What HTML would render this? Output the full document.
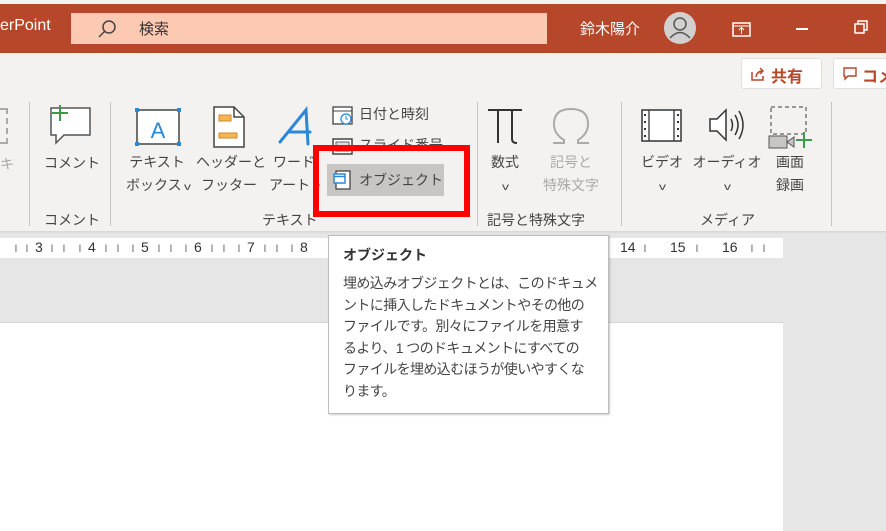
<!DOCTYPE html>
<html><head><meta charset="utf-8"><style>
*{margin:0;padding:0;box-sizing:border-box}
body{width:886px;height:531px;overflow:hidden;background:#e6e6e6;font-family:"Liberation Sans","Noto Sans CJK JP",sans-serif;position:relative}
.a{position:absolute;white-space:nowrap}
.t{font-size:14px;color:#444}
.c{text-align:center}
.sep{position:absolute;width:1px;background:#c8c6c4}
.v{font-size:10px;display:inline-block;transform:scaleX(1.4)}
</style></head><body>
<div class="a" style="left:0;top:0;width:886px;height:4px;background:#f3f2f1"></div>
<div class="a" style="left:0;top:4px;width:886px;height:49px;background:#b7472a"></div>
<div class="a" style="left:0;top:17px;color:#fff;font-size:16px">erPoint</div>
<div class="a" style="left:71px;top:13px;width:476px;height:31px;background:#fcc9b3"></div>
<svg class="a" style="left:94px;top:18px" width="26" height="22"><circle cx="15" cy="9" r="6" fill="none" stroke="#444" stroke-width="1.5"/><line x1="11" y1="13" x2="5" y2="19" stroke="#444" stroke-width="1.5"/></svg>
<div class="a" style="left:139px;top:18px;font-size:15px;color:#333">検索</div>
<div class="a" style="left:580px;top:18px;font-size:15px;color:#fff">鈴木陽介</div>
<svg class="a" style="left:663px;top:11px" width="34" height="34"><circle cx="17" cy="17" r="16" fill="#d2d0ce"/><circle cx="17" cy="13" r="6" fill="none" stroke="#555" stroke-width="1.5"/><path d="M7 27 Q17 16 27 27" fill="none" stroke="#555" stroke-width="1.5"/></svg>
<svg class="a" style="left:731px;top:20px" width="22" height="18"><rect x="2" y="3" width="17" height="13" fill="none" stroke="#fff" stroke-width="1.5"/><line x1="2" y1="6" x2="19" y2="6" stroke="#fff"/><path d="M10.5 14V8M8 10l2.5-2.5L13 10" stroke="#fff" fill="none"/></svg>
<div class="a" style="left:796px;top:28px;width:12px;height:1.5px;background:#fff"></div>
<svg class="a" style="left:853px;top:19px" width="16" height="16"><rect x="2" y="5" width="9" height="9" fill="none" stroke="#fff" stroke-width="1.5"/><path d="M5 5V2h9v9h-3" fill="none" stroke="#fff" stroke-width="1.5"/></svg>
<div class="a" style="left:0;top:53px;width:886px;height:180px;background:#f3f2f1"></div>
<div class="a" style="left:741px;top:58px;width:81px;height:31px;background:#fff;border:1px solid #e1dfdd;border-radius:3px"></div>
<svg class="a" style="left:749px;top:65px" width="18" height="18"><path d="M3 7v8h11v-4" fill="none" stroke="#b7472a" stroke-width="1.5"/><path d="M7 12Q8 6 14 6M11 3l3 3-3 3" fill="none" stroke="#b7472a" stroke-width="1.5"/></svg>
<div class="a" style="left:771px;top:63px;font-size:16px;font-weight:bold;color:#b7472a">共有</div>
<div class="a" style="left:833px;top:58px;width:60px;height:31px;background:#fff;border:1px solid #e1dfdd;border-radius:3px"></div>
<svg class="a" style="left:842px;top:66px" width="16" height="16"><path d="M2 2h12v8H6l-3 3v-3H2z" fill="none" stroke="#b7472a" stroke-width="1.4"/></svg>
<div class="a" style="left:862px;top:63px;font-size:16px;font-weight:bold;color:#b7472a">コメ</div>
<div class="a" style="left:0;top:108px;width:8px;height:36px;border:2px dashed #aaa;border-left:none"></div>
<div class="a" style="left:0;top:154px;font-size:14px;color:#aaa">キ</div>
<div class="sep" style="left:29px;top:102px;height:124px"></div>
<svg class="a" style="left:46px;top:104px" width="46" height="42"><path d="M5 4h39v27H18l-8 8v-8H5z" fill="#fff" stroke="#555" stroke-width="1.5"/><path d="M14 1v16M6 9h16" stroke="#3a9b4a" stroke-width="2"/></svg>
<div class="a t" style="left:44px;top:153px">コメント</div>
<div class="a t" style="left:44px;top:210px">コメント</div>
<div class="sep" style="left:110px;top:102px;height:124px"></div>
<svg class="a" style="left:134px;top:107px" width="48" height="40"><rect x="3" y="3" width="42" height="34" fill="#fff" stroke="#444" stroke-width="1.5"/><g fill="#2b88d8"><rect x="1" y="1" width="4" height="4"/><rect x="43" y="1" width="4" height="4"/><rect x="1" y="35" width="4" height="4"/><rect x="43" y="35" width="4" height="4"/></g><text x="24" y="31" font-size="22" fill="#2b88d8" text-anchor="middle" font-family="Liberation Sans">A</text></svg>
<svg class="a" style="left:212px;top:105px" width="34" height="44"><path d="M2 2h20l10 10v30H2z" fill="#fff" stroke="#444" stroke-width="1.5"/><path d="M22 2v10h10" fill="none" stroke="#444" stroke-width="1.5"/><rect x="7" y="10" width="12" height="6" fill="#f4b555" stroke="#d08a2a"/><rect x="7" y="28" width="18" height="5" fill="#f4b555" stroke="#d08a2a"/></svg>
<svg class="a" style="left:276px;top:106px" width="40" height="42"><path d="M4 36L30 4 32 38M12 26h22" fill="none" stroke="#2b88d8" stroke-width="3" stroke-linecap="round"/></svg>
<div class="a t c" style="left:126px;top:151px;width:62px;line-height:23px">テキスト<br>ボックス <span class="v">v</span></div>
<div class="a t c" style="left:196px;top:151px;width:66px;line-height:23px">ヘッダーと<br>フッター</div>
<div class="a t c" style="left:266px;top:151px;width:56px;line-height:23px">ワード<br>アート <span class="v">v</span></div>
<svg class="a" style="left:331px;top:104px" width="24" height="22"><rect x="2" y="3" width="19" height="17" fill="#fff" stroke="#444" stroke-width="1.3"/><line x1="2" y1="7" x2="21" y2="7" stroke="#444"/><circle cx="15" cy="15" r="5" fill="#fff" stroke="#2b88d8" stroke-width="1.3"/><path d="M15 12v3h2" stroke="#2b88d8" fill="none"/></svg>
<div class="a t" style="left:359px;top:104px">日付と時刻</div>
<svg class="a" style="left:331px;top:137px" width="24" height="20"><rect x="2" y="2" width="19" height="15" fill="#fff" stroke="#444" stroke-width="1.5"/><rect x="5" y="5" width="13" height="9" fill="#ddd" stroke="#666"/></svg>
<div class="a t" style="left:359px;top:135px">スライド番号</div>
<div class="a" style="left:327px;top:164px;width:117px;height:32px;background:#c8c6c4"></div>
<svg class="a" style="left:331px;top:168px" width="24" height="24"><rect x="5" y="3" width="14" height="18" fill="#fff" stroke="#444" stroke-width="1.3"/><rect x="3" y="6" width="11" height="9" fill="#fff" stroke="#2b88d8" stroke-width="1.5"/><line x1="3" y1="8.5" x2="14" y2="8.5" stroke="#2b88d8" stroke-width="1.5"/></svg>
<div class="a t" style="left:359px;top:170px">オブジェクト</div>
<div class="a t" style="left:262px;top:210px">テキスト</div>
<div class="a" style="left:313px;top:145px;width:157px;height:72px;border:6px solid #f00"></div>
<div class="sep" style="left:477px;top:102px;height:124px"></div>
<svg class="a" style="left:485px;top:106px" width="40" height="40"><path d="M3 4h34M13 4v33M27 4v29q0 4 5 4" fill="none" stroke="#333" stroke-width="2"/></svg>
<svg class="a" style="left:549px;top:106px" width="44" height="40"><path d="M4 37h11v-3q-10-6-10-16 0-15 17-15t17 15q0 10-10 16v3h11" fill="none" stroke="#aaa" stroke-width="2"/></svg>
<div class="a t c" style="left:482px;top:151px;width:46px;line-height:23px">数式<br><span class="v">v</span></div>
<div class="a t c" style="left:535px;top:151px;width:72px;line-height:23px;color:#aaa">記号と<br>特殊文字</div>
<div class="a t" style="left:487px;top:210px">記号と特殊文字</div>
<div class="sep" style="left:621px;top:102px;height:124px"></div>
<svg class="a" style="left:641px;top:109px" width="42" height="34"><rect x="1" y="1" width="39" height="31" fill="#fff" stroke="#333" stroke-width="1.5"/><line x1="8" y1="1" x2="8" y2="32" stroke="#333" stroke-width="1.3"/><line x1="33" y1="1" x2="33" y2="32" stroke="#333" stroke-width="1.3"/><g fill="#333"><rect x="3" y="5" width="2" height="2"/><rect x="3" y="12" width="2" height="2"/><rect x="3" y="19" width="2" height="2"/><rect x="3" y="26" width="2" height="2"/><rect x="36" y="5" width="2" height="2"/><rect x="36" y="12" width="2" height="2"/><rect x="36" y="19" width="2" height="2"/><rect x="36" y="26" width="2" height="2"/></g></svg>
<svg class="a" style="left:707px;top:107px" width="40" height="36"><path d="M3 12h7l9-9v30l-9-9H3z" fill="#fff" stroke="#333" stroke-width="1.5"/><path d="M24 12q3 6 0 12M28 8q6 10 0 20M32 4q8 14 0 28" fill="none" stroke="#333" stroke-width="1.5"/></svg>
<svg class="a" style="left:768px;top:106px" width="46" height="44"><rect x="3" y="1" width="35" height="27" fill="none" stroke="#777" stroke-width="1.5" stroke-dasharray="4 3"/><rect x="1" y="30" width="18" height="12" fill="#c8c6c4" stroke="#555"/><path d="M19 36l7-5v10z" fill="#c8c6c4" stroke="#555"/><path d="M36 26v16M28 34h16" stroke="#3a9b4a" stroke-width="2"/></svg>
<div class="a t c" style="left:636px;top:151px;width:52px;line-height:23px">ビデオ<br><span class="v">v</span></div>
<div class="a t c" style="left:692px;top:151px;width:70px;line-height:23px">オーディオ<br><span class="v">v</span></div>
<div class="a t c" style="left:768px;top:151px;width:44px;line-height:23px">画面<br>録画</div>
<div class="a t" style="left:700px;top:210px">メディア</div>
<div class="sep" style="left:831px;top:102px;height:124px"></div>
<div class="a" style="left:0;top:231px;width:886px;height:3px;background:linear-gradient(#d6d6d6,#e6e6e6)"></div>
<div class="a" style="left:0;top:238px;width:783px;height:20px;background:#fff"></div>
<div class="a" style="left:0;top:239px;font-size:14px;color:#333">
<span style="position:absolute;left:14px;color:#888">ı</span><span style="position:absolute;left:35px">3</span><span style="position:absolute;left:25px;color:#888">ı</span><span style="position:absolute;left:50px;color:#888">ı</span><span style="position:absolute;left:62px;color:#888">ı</span><span style="position:absolute;left:88px">4</span><span style="position:absolute;left:78px;color:#888">ı</span><span style="position:absolute;left:104px;color:#888">ı</span><span style="position:absolute;left:116px;color:#888">ı</span><span style="position:absolute;left:141px">5</span><span style="position:absolute;left:131px;color:#888">ı</span><span style="position:absolute;left:157px;color:#888">ı</span><span style="position:absolute;left:169px;color:#888">ı</span><span style="position:absolute;left:194px">6</span><span style="position:absolute;left:184px;color:#888">ı</span><span style="position:absolute;left:210px;color:#888">ı</span><span style="position:absolute;left:222px;color:#888">ı</span><span style="position:absolute;left:247px">7</span><span style="position:absolute;left:237px;color:#888">ı</span><span style="position:absolute;left:263px;color:#888">ı</span><span style="position:absolute;left:275px;color:#888">ı</span><span style="position:absolute;left:300px">8</span><span style="position:absolute;left:290px;color:#888">ı</span>
<span style="position:absolute;left:620px">14</span><span style="position:absolute;left:643px;color:#888">ı</span><span style="position:absolute;left:670px">15</span><span style="position:absolute;left:695px;color:#888">ı</span><span style="position:absolute;left:722px">16</span><span style="position:absolute;left:750px;color:#888">ı</span><span style="position:absolute;left:762px;color:#888">ı</span></div>
<div class="a" style="left:0;top:323px;width:783px;height:208px;background:#fff"></div>
<div class="a" style="left:0;top:322px;width:783px;height:1px;background:#d4d4d4"></div>
<div class="a" style="left:328px;top:235px;width:281px;height:179px;background:#fff;border:1px solid #bcbcbc;box-shadow:1px 1px 2px rgba(0,0,0,.2)"></div>
<div class="a" style="left:343px;top:245px;font-size:14px;font-weight:bold;color:#333">オブジェクト</div>
<div class="a" style="left:343px;top:273px;font-size:14px;color:#444;line-height:21.5px;letter-spacing:-0.6px">埋め込みオブジェクトとは、このドキュメ<br>ントに挿入したドキュメントやその他の<br>ファイルです。別々にファイルを用意す<br>るより、1 つのドキュメントにすべての<br>ファイルを埋め込むほうが使いやすくな<br>ります。</div>
</body></html>
